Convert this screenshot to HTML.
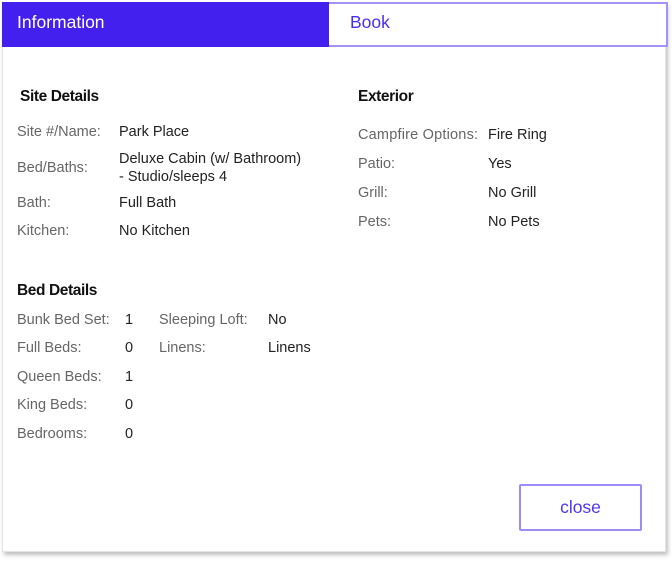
<!DOCTYPE html>
<html><head><style>
body{margin:0;width:672px;height:563px;background:#fff;font-family:"Liberation Sans",sans-serif;position:relative;overflow:hidden}
.card{position:absolute;left:2px;top:2px;width:664px;height:550px;background:#fff;box-shadow:2px 3px 4px rgba(0,0,0,.25);border:1px solid #e4e4e4;box-sizing:border-box}
.t{position:absolute;white-space:nowrap;font-size:14.5px;color:#222}
.l{color:#666}
.h{font-size:15.5px;font-weight:bold;color:#111;letter-spacing:-.4px}
</style></head><body>
<div class="card"></div>
<div style="position:absolute;left:2px;top:2px;width:327px;height:45px;background:#4420ee"></div>
<div style="position:absolute;left:329px;top:2px;width:339px;height:45px;box-sizing:border-box;border:2px solid #a593f8;border-left:none;background:#fff"></div>
<div class="t" style="left:17px;top:12px;font-size:17.5px;color:#fff">Information</div>
<div class="t" style="left:350px;top:12px;font-size:17.5px;color:#4a2ef0">Book</div>

<div class="t h" style="left:20px;top:88px">Site Details</div>
<div class="t l" style="left:17px;top:124px">Site #/Name:</div><div class="t" style="left:119px;top:124px">Park Place</div>
<div class="t l" style="left:17px;top:160px">Bed/Baths:</div><div class="t" style="left:119px;top:150px;line-height:18px">Deluxe Cabin (w/ Bathroom)<br>- Studio/sleeps 4</div>
<div class="t l" style="left:17px;top:195px">Bath:</div><div class="t" style="left:119px;top:195px">Full Bath</div>
<div class="t l" style="left:17px;top:223px">Kitchen:</div><div class="t" style="left:119px;top:223px">No Kitchen</div>

<div class="t h" style="left:358px;top:88px">Exterior</div>
<div class="t l" style="left:358px;top:127px;letter-spacing:.2px">Campfire Options:</div><div class="t" style="left:488px;top:127px">Fire Ring</div>
<div class="t l" style="left:358px;top:156px">Patio:</div><div class="t" style="left:488px;top:156px">Yes</div>
<div class="t l" style="left:358px;top:185px">Grill:</div><div class="t" style="left:488px;top:185px">No Grill</div>
<div class="t l" style="left:358px;top:214px">Pets:</div><div class="t" style="left:488px;top:214px">No Pets</div>

<div class="t h" style="left:17px;top:282px">Bed Details</div>
<div class="t l" style="left:17px;top:312px">Bunk Bed Set:</div><div class="t" style="left:125px;top:312px">1</div>
<div class="t l" style="left:17px;top:340px">Full Beds:</div><div class="t" style="left:125px;top:340px">0</div>
<div class="t l" style="left:17px;top:369px">Queen Beds:</div><div class="t" style="left:125px;top:369px">1</div>
<div class="t l" style="left:17px;top:397px">King Beds:</div><div class="t" style="left:125px;top:397px">0</div>
<div class="t l" style="left:17px;top:426px">Bedrooms:</div><div class="t" style="left:125px;top:426px">0</div>
<div class="t l" style="left:159px;top:312px">Sleeping Loft:</div><div class="t" style="left:268px;top:312px">No</div>
<div class="t l" style="left:159px;top:340px">Linens:</div><div class="t" style="left:268px;top:340px">Linens</div>

<div style="position:absolute;left:519px;top:484px;width:123px;height:47px;box-sizing:border-box;border:2px solid #9d8cf7;border-radius:2px;color:#5035f0;font-size:17.5px;text-align:center;line-height:43px">close</div>
</body></html>
